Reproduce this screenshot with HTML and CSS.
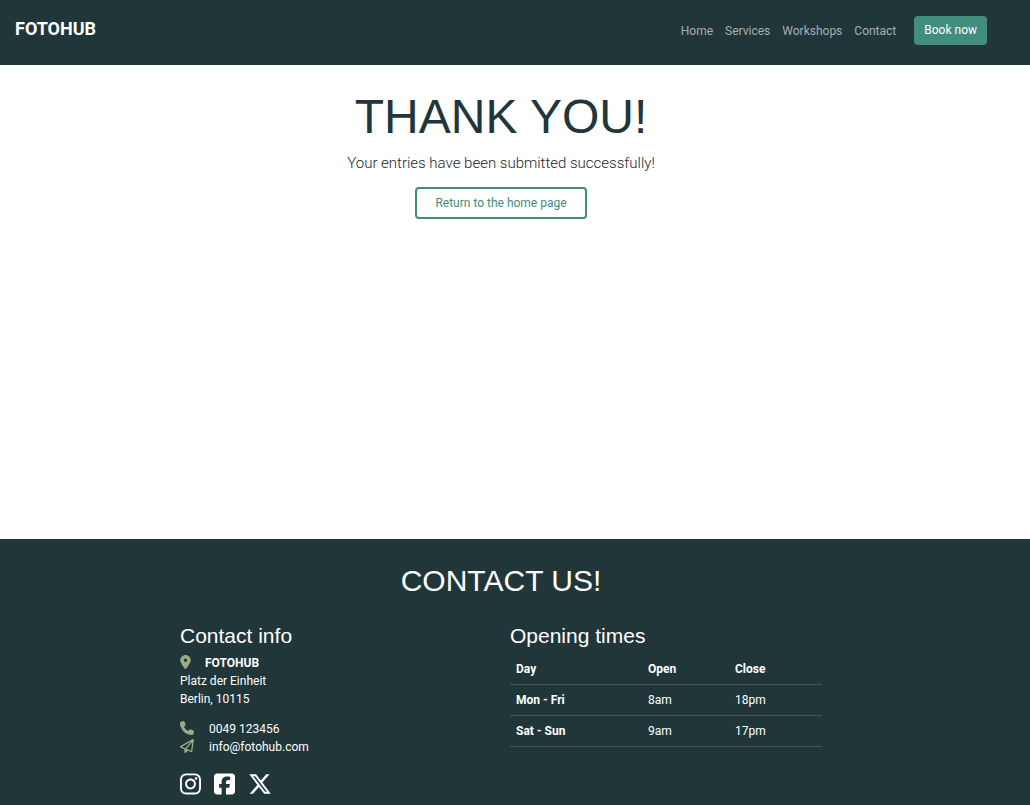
FILE: index.html
```html
<!DOCTYPE html>
<html lang="en">
<head>
<meta charset="utf-8">
<meta name="viewport" content="width=device-width, initial-scale=1">
<title>FOTOHUB</title>
<link rel="stylesheet" href="styles.css">
</head>
<body>
<header class="site-header">
  <a class="brand" href="#">FOTOHUB</a>
  <nav class="site-nav">
    <a class="nav-link" href="#">Home</a>
    <a class="nav-link" href="#">Services</a>
    <a class="nav-link" href="#">Workshops</a>
    <a class="nav-link" href="#contact">Contact</a>
    <button class="book-button" type="button">Book now</button>
  </nav>
</header>
<main class="thanks">
  <h1 class="thanks-title">THANK YOU!</h1>
  <p class="thanks-text">Your entries have been submitted successfully!</p>
  <a class="home-button" href="#">Return to the home page</a>
</main>
<footer class="site-footer" id="contact">
  <h2 class="footer-title">CONTACT US!</h2>
  <div class="footer-columns">
    <section class="contact">
      <h3 class="column-title">Contact info</h3>
      <address class="address">
        <div class="name-row"><svg class="icon pin" viewBox="0 0 384 512" aria-hidden="true"><path d="M215.7 499.2C267 435 384 279.4 384 192C384 86 298 0 192 0S0 86 0 192c0 87.4 117 243 168.3 307.2c12.3 15.3 35.1 15.3 47.4 0zM192 128a64 64 0 1 1 0 128 64 64 0 1 1 0-128z"/></svg><strong>FOTOHUB</strong></div>
        <div>Platz der Einheit</div>
        <div>Berlin, 10115</div>
      </address>
      <div class="contact-row"><svg class="icon" viewBox="0 0 512 512" aria-hidden="true"><path d="M164.9 24.6c-7.7-18.6-28-28.5-47.4-23.2l-88 24C12.1 30.2 0 46 0 64C0 311.4 200.6 512 448 512c18 0 33.8-12.1 38.6-29.5l24-88c5.3-19.4-4.6-39.7-23.2-47.4l-96-40c-16.3-6.8-35.2-2.1-46.3 11.6L304.7 368C234.3 334.7 177.3 277.7 144 207.3L193.3 167c13.7-11.2 18.4-30 11.6-46.3l-40-96z"/></svg><a href="tel:0049123456">0049 123456</a></div>
      <div class="contact-row"><svg class="icon" viewBox="0 0 512 512" aria-hidden="true"><path d="M16.1 260.2c-22.6 12.9-20.5 47.3 3.6 57.3L160 376V479.3c0 18.1 14.6 32.7 32.7 32.7c9.7 0 18.9-4.3 25.1-11.8l62-74.3 123.9 51.6c18.9 7.9 40.8-4.5 43.9-24.7l64-416c1.9-12.1-3.4-24.3-13.5-31.2s-23.3-7.5-34-1.4l-448 256zm52.1 25.5L409.7 90.6 190.1 336l1.2 1L68.2 285.7zM403.3 425.4L236.7 355.9 450.8 116.6 403.3 425.4z"/></svg><a href="mailto:info@fotohub.com">info@fotohub.com</a></div>
      <div class="socials">
        <a class="social" href="#" aria-label="Instagram"><svg class="social-icon" viewBox="0 0 448 512"><path d="M224.1 141c-63.6 0-114.9 51.3-114.9 114.9s51.3 114.9 114.9 114.9S339 319.5 339 255.9 287.7 141 224.1 141zm0 189.6c-41.1 0-74.7-33.5-74.7-74.7s33.5-74.7 74.7-74.7 74.7 33.5 74.7 74.7-33.6 74.7-74.7 74.7zm146.4-194.3c0 14.9-12 26.8-26.8 26.8-14.9 0-26.8-12-26.8-26.8s12-26.8 26.8-26.8 26.8 12 26.8 26.8zm76.1 27.2c-1.7-35.9-9.9-67.7-36.2-93.9-26.2-26.2-58-34.4-93.9-36.2-37-2.1-147.9-2.1-184.9 0-35.8 1.7-67.6 9.9-93.9 36.1s-34.4 58-36.2 93.9c-2.1 37-2.1 147.9 0 184.9 1.7 35.9 9.9 67.7 36.2 93.9s58 34.4 93.9 36.2c37 2.1 147.9 2.1 184.9 0 35.9-1.7 67.7-9.9 93.9-36.2 26.2-26.2 34.4-58 36.2-93.9 2.1-37 2.1-147.8 0-184.8zM398.8 388c-7.8 19.6-22.9 34.7-42.6 42.6-29.5 11.7-99.5 9-132.1 9s-102.7 2.6-132.1-9c-19.6-7.8-34.7-22.9-42.6-42.6-11.7-29.5-9-99.5-9-132.1s-2.6-102.7 9-132.1c7.8-19.6 22.9-34.7 42.6-42.6 29.5-11.7 99.5-9 132.1-9s102.7-2.6 132.1 9c19.6 7.8 34.7 22.9 42.6 42.6 11.7 29.5 9 99.5 9 132.1s2.7 102.7-9 132.1z"/></svg></a>
        <a class="social" href="#" aria-label="Facebook"><svg class="social-icon" viewBox="0 0 448 512"><path d="M64 32C28.7 32 0 60.7 0 96V416c0 35.3 28.7 64 64 64h98.2V334.2H109.4V256h52.8V222.3c0-87.1 39.4-127.5 125-127.5c16.2 0 44.2 3.2 55.7 6.4V172c-6-.6-16.5-1-29.6-1c-42 0-58.2 15.9-58.2 57.2V256h83.6l-14.4 78.2H255V480H384c35.3 0 64-28.7 64-64V96c0-35.3-28.7-64-64-64H64z"/></svg></a>
        <a class="social" href="#" aria-label="X"><svg class="social-icon wide" viewBox="0 0 512 512"><path d="M389.2 48h70.6L305.6 224.2 487 464H345L233.7 318.6 106.5 464H35.8L200.7 275.5 26.8 48H172.4L272.9 180.9 389.2 48zM364.4 421.8h39.1L151.1 88h-42L364.4 421.8z"/></svg></a>
      </div>
    </section>
    <section class="opening">
      <h3 class="column-title">Opening times</h3>
      <table class="hours">
        <thead><tr><th class="day" scope="col">Day</th><th class="open" scope="col">Open</th><th scope="col">Close</th></tr></thead>
        <tbody>
          <tr><th scope="row">Mon - Fri</th><td>8am</td><td>18pm</td></tr>
          <tr><th scope="row">Sat - Sun</th><td>9am</td><td>17pm</td></tr>
        </tbody>
      </table>
    </section>
  </div>
</footer>
</body>
</html>
```

FILE: styles.css
```css
* { box-sizing: border-box; }

body {
  display: flex;
  flex-direction: column;
  min-height: 100vh;
  margin: 0;
  background: #fff;
  color: #212529;
  font: 400 12px/18px Roboto, sans-serif;
}

h1, h2, h3, p { margin: 0; }
a { color: inherit; text-decoration: none; }
svg { display: block; fill: currentColor; }

.site-header {
  display: flex;
  align-items: flex-start;
  justify-content: space-between;
  padding: 16px 43px 20px 15px;
  background: #203639;
}

.brand {
  color: #fff;
  font-size: 18px;
  font-weight: 700;
  line-height: 26px;
}

.site-nav {
  display: flex;
  align-items: center;
  gap: 12px;
}

.nav-link { color: #a6afb0; }

.book-button {
  margin-left: 6px;
  padding: 5px 10px 6px;
  border: 0;
  border-radius: 4px;
  background: #418d7e;
  color: #fff;
  font: inherit;
}

.thanks {
  display: flex;
  flex: 1;
  flex-direction: column;
  align-items: center;
  padding: 24px 28px 24px 0;
}

.thanks-title {
  color: #203639;
  font: 400 48px/56px "Liberation Sans", Arial, sans-serif;
}

.thanks-text {
  margin-top: 6px;
  font-size: 15px;
  font-weight: 300;
  line-height: 24px;
}

.home-button {
  margin-top: 12px;
  padding: 5px 18px;
  border: 2px solid #418d7e;
  border-radius: 4px;
  color: #418d7e;
}

.site-footer {
  padding: 24px 28px 9px 0;
  background: #203639;
  color: #fff;
}

.footer-title {
  font: 400 30px/36px "Liberation Sans", Arial, sans-serif;
  text-align: center;
}

.footer-columns {
  display: grid;
  grid-template-columns: 1fr 1fr;
  gap: 18px;
  max-width: 642px;
  margin: 25px auto 0;
}

.column-title {
  font: 400 21px/24px "Liberation Sans", Arial, sans-serif;
}

.address {
  margin: 6px 0 12px;
  font-style: normal;
}

.name-row,
.contact-row {
  display: flex;
  align-items: flex-start;
  gap: 14px;
}

.contact-row { gap: 15px; }

.icon {
  width: 14px;
  height: 14px;
  margin-top: 1px;
  color: #9cab84;
}

.pin { width: 11px; }

.socials {
  display: flex;
  gap: 13px;
  margin-top: 16px;
}

.social-icon {
  width: 21px;
  height: 24px;
}

.social-icon.wide { width: 24px; }

.hours {
  width: 100%;
  margin-top: 6px;
  border-collapse: collapse;
  text-align: left;
}

.hours th,
.hours td {
  padding: 6px;
  border-bottom: 1px solid #4f4e54;
}

.day { width: 132px; }
.open { width: 87px; }
```
